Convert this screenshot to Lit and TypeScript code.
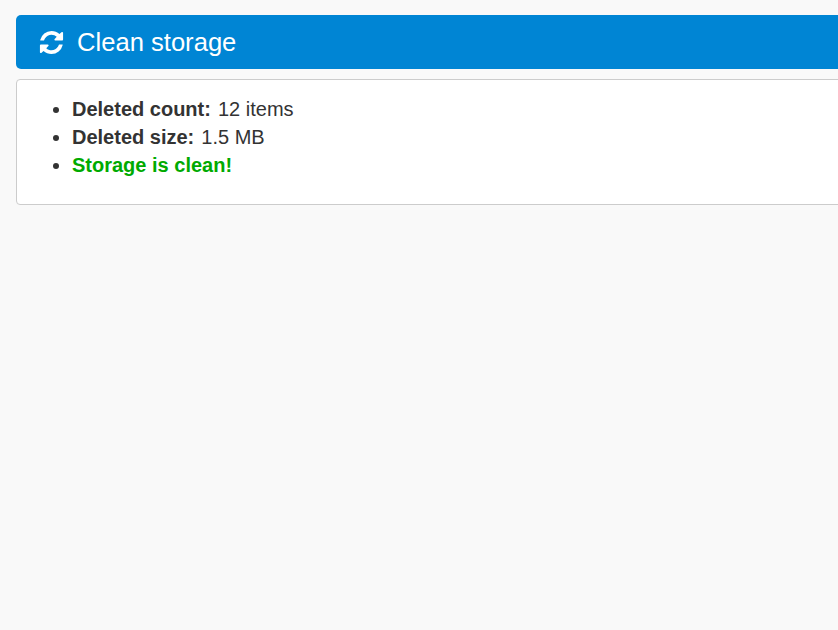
import { LitElement, html, css } from "lit";
import { customElement } from "lit/decorators.js";

@customElement("app-root")
export class AppRoot extends LitElement {
  static styles = css`
    :host {
      display: block;
      box-sizing: border-box;
      height: 630px;
      overflow: hidden;
      background: #f9f9f9;
      padding: 15px 0 0 16px;
      font-family: "Liberation Sans", Arial, sans-serif;
      color: #333;
    }
    .wrap { width: 900px; }
    .bar {
      display: flex;
      align-items: center;
      gap: 12px;
      box-sizing: border-box;
      height: 54px;
      padding-left: 22px;
      background: #0085d4;
      color: #fff;
      border-radius: 5px;
      font-size: 25.6px;
    }
    .bar svg { width: 27px; height: 27px; fill: #fff; display: block; }
    .panel {
      box-sizing: border-box;
      height: 126px;
      margin-top: 10px;
      background: #fff;
      border: 1px solid #ccc;
      border-radius: 4px;
      font-size: 20px;
      line-height: 28px;
    }
    ul { margin: 15px 0 0; padding: 0 0 0 55px; }
    b { margin-right: 1.5px; }
    .ok { color: #00aa00; font-weight: bold; }
  `;

  render() {
    return html`
      <div class="wrap">
        <div class="bar">
          <svg viewBox="0 0 1792 1792" aria-hidden="true"><path d="M1639 1056q0 5-1 7-64 268-268 434.5t-478 166.5q-146 0-282.5-55t-243.5-157l-129 129q-19 19-45 19t-45-19-19-45v-448q0-26 19-45t45-19h448q26 0 45 19t19 45-19 45l-137 137q71 66 161 102t187 36q134 0 250-65t186-179q11-17 53-117 8-23 30-23h192q13 0 22.5 9.5t9.5 22.5zm25-800v448q0 26-19 45t-45 19h-448q-26 0-45-19t-19-45 19-45l138-138q-148-137-349-137-134 0-250 65t-186 179q-11 17-53 117-8 23-30 23h-199q-13 0-22.5-9.5t-9.5-22.5v-7q65-268 270-434.5t480-166.5q146 0 284 55.5t245 156.5l130-129q19-19 45-19t45 19 19 45z"/></svg>
          <span>Clean storage</span>
        </div>
        <div class="panel">
          <ul>
            <li><b>Deleted count:</b> 12 items</li>
            <li><b>Deleted size:</b> 1.5 MB</li>
            <li><span class="ok">Storage is clean!</span></li>
          </ul>
        </div>
      </div>
    `;
  }
}
